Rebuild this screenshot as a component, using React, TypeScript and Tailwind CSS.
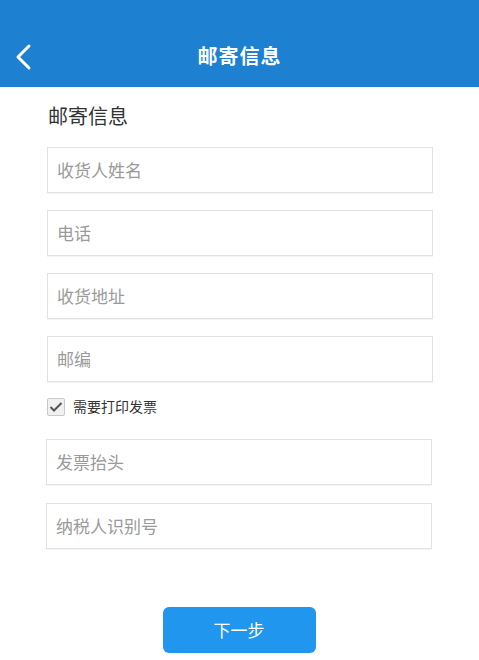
import React from "react";

const font = { fontFamily: '"Noto Sans CJK SC", "Liberation Sans", sans-serif' };

function Field({ placeholder, className = "" }: { placeholder: string; className?: string }) {
  return (
    <div
      className={`h-[46px] border border-[#e2e2e2] bg-white flex items-center pl-[9px] text-[17px] text-[#9a9a9a] shadow-[0_1px_1px_rgba(0,0,0,0.04)] ${className}`}
    >
      {placeholder}
    </div>
  );
}

export default function App() {
  return (
    <div className="w-[479px] h-[660px] bg-white overflow-hidden" style={font}>
      <div className="h-[87px] bg-[#1d80d0] flex items-end">
        <div className="relative h-[60px] w-full flex items-center justify-center">
          <svg className="absolute left-[13px] top-[16px]" width="20" height="28" viewBox="0 0 20 28">
            <path d="M16 3 L5 14 L16 25" fill="none" stroke="white" strokeWidth="3" strokeLinecap="round" strokeLinejoin="round" />
          </svg>
          <span className="text-white text-[20px] font-bold tracking-[1px] mt-[-2px]">邮寄信息</span>
        </div>
      </div>
      <div className="pl-[47px] pr-[46px]">
        <div className="pt-[15px] text-[20px] text-[#333] leading-[28px] pl-[1px]">邮寄信息</div>
        <div className="mt-[17px] flex flex-col gap-[17px]">
          <Field placeholder="收货人姓名" />
          <Field placeholder="电话" />
          <Field placeholder="收货地址" />
          <Field placeholder="邮编" />
        </div>
        <div className="mt-[14px] flex items-center gap-[8px]">
          <div className="w-[18px] h-[18px] border border-[#c8c8c8] bg-[#f0f0f0] rounded-[2px] flex items-center justify-center">
            <svg width="14" height="12" viewBox="0 0 14 12">
              <path d="M1.5 6 L5 9.5 L12.5 2" fill="none" stroke="#555" strokeWidth="2" />
            </svg>
          </div>
          <span className="text-[14px] text-[#333]">需要打印发票</span>
        </div>
        <div className="mt-[22px] flex flex-col gap-[18px] ml-[-1px] mr-[1px]">
          <Field placeholder="发票抬头" />
          <Field placeholder="纳税人识别号" />
        </div>
      </div>
      <div className="mt-[58px] flex justify-center">
        <div className="ml-[-1px] w-[153px] h-[46px] rounded-[6px] bg-[#2196ee] text-white text-[17px] flex items-center justify-center">
          下一步
        </div>
      </div>
    </div>
  );
}
